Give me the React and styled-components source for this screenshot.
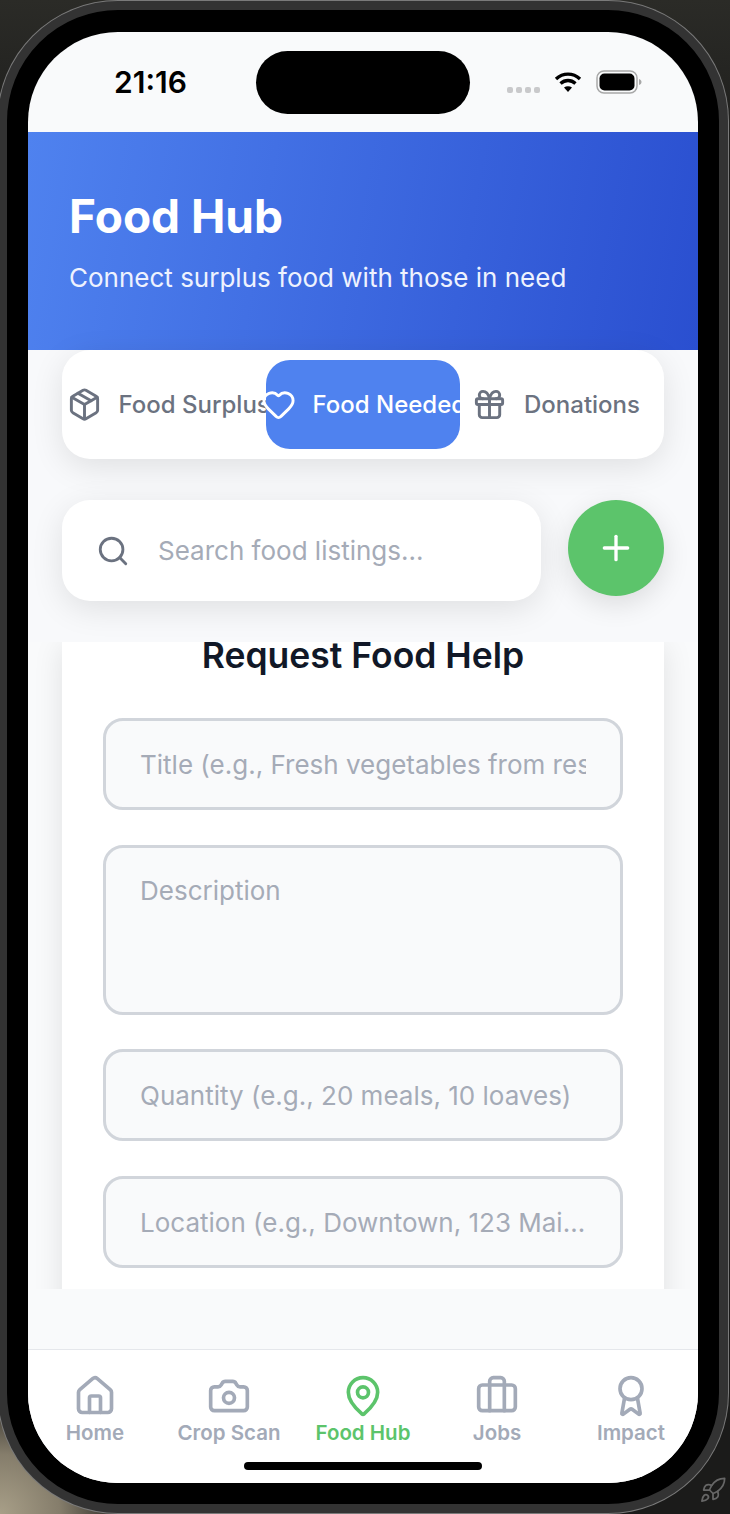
import React from 'react';
import styled, { createGlobalStyle } from 'styled-components';
import { Package, Heart, Gift, Search, Plus, House, Camera, MapPin, Briefcase, Award, Rocket } from 'lucide-react';

const GlobalStyle = createGlobalStyle`
  html, body {
    margin: 0;
    padding: 0;
    background: #1b1b1a;
  }
  * {
    box-sizing: border-box;
  }
`;

const Backdrop = styled.div`
  position: relative;
  width: 730px;
  height: 1514px;
  padding-top: 1px;
  overflow: hidden;
  background:
    radial-gradient(circle at 0 100%, #a89f88 0, #857d6b 60px, rgba(60, 56, 48, 0) 130px),
    linear-gradient(180deg, #2b2b27 0, #1b1b1a 12%, #1b1b1a 100%);
  font-family: Inter, 'Noto Sans', sans-serif;
`;

const Device = styled.div`
  width: 730px;
  height: 1512px;
  margin-left: -2px;
  padding: 22px 21px;
  background: #000;
  border: 9px solid #333;
  border-radius: 120px;
  box-shadow: 0 0 0 1px #7a7a7a;
`;

const Screen = styled.div`
  position: relative;
  display: flex;
  flex-direction: column;
  width: 670px;
  height: 1451px;
  overflow: hidden;
  background: #f9fafb;
  border-radius: 90px;
`;

const StatusBar = styled.div`
  position: relative;
  flex: 0 0 100px;
  display: flex;
  align-items: center;
  padding: 0 56px 0 86px;
`;

const Clock = styled.span`
  font-size: 30px;
  font-weight: 600;
  color: #000;
`;

const Island = styled.div`
  position: absolute;
  left: 228px;
  top: 19px;
  width: 214px;
  height: 63px;
  border-radius: 32px;
  background: #000;
`;

const StatusRight = styled.div`
  margin-left: auto;
  display: flex;
  align-items: center;
  gap: 14px;
`;

const Dots = styled.div`
  display: flex;
  gap: 3px;
  margin-top: 15px;
`;

const Dot = styled.i`
  width: 6px;
  height: 6px;
  border-radius: 2px;
  background: #c9c9cb;
`;

const Header = styled.header`
  flex: 0 0 218px;
  padding: 56px 41px 0;
  background: linear-gradient(100deg, #4f82ef 0%, #2a4fd0 100%);
  color: #fff;
`;

const Title = styled.h1`
  margin: 0;
  font-size: 46px;
  line-height: 56px;
  font-weight: 700;
`;

const Subtitle = styled.p`
  margin: 18px 0 0;
  font-size: 26px;
  line-height: 32px;
  font-weight: 400;
  color: #eef2fe;
`;

const TopArea = styled.div`
  flex: 0 0 292px;
  padding: 0 34px;
  background: #f8f9fb;
`;

const Tabs = styled.div`
  display: flex;
  height: 109px;
  padding: 10px;
  background: #fff;
  border-radius: 28px;
  box-shadow: 0 8px 32px rgba(0, 0, 0, 0.1);
`;

const Tab = styled.div`
  flex: 0 0 194px;
  min-width: 0;
  display: flex;
  align-items: center;
  justify-content: center;
  border-radius: 24px;
  background: ${({ $active }) => ($active ? '#4f82ef' : 'transparent')};
  color: ${({ $active }) => ($active ? '#fff' : '#6b7280')};
  svg {
    flex: none;
    margin-right: 17px;
    position: relative;
    z-index: 1;
  }
`;

const TabLabel = styled.span`
  flex: none;
  max-width: 147px;
  margin-right: ${({ $clipped }) => ($clipped ? '6px' : '2px')};
  overflow: hidden;
  white-space: nowrap;
  font-size: 24px;
  font-weight: 500;
`;

const SearchRow = styled.div`
  display: flex;
  align-items: flex-start;
  justify-content: space-between;
  margin-top: 41px;
`;

const SearchBox = styled.div`
  display: flex;
  align-items: center;
  width: 479px;
  height: 101px;
  padding: 0 34px;
  background: #fff;
  border-radius: 28px;
  box-shadow: 0 8px 32px rgba(0, 0, 0, 0.1);
  color: #6b7280;
`;

const SearchInput = styled.input`
  flex: 1;
  min-width: 0;
  margin-left: 28px;
  border: 0;
  outline: 0;
  padding: 0;
  background: transparent;
  font: 400 26px Inter, sans-serif;
  &::placeholder {
    color: #a5abb7;
    opacity: 1;
  }
`;

const Fab = styled.div`
  display: flex;
  align-items: center;
  justify-content: center;
  width: 96px;
  height: 96px;
  border-radius: 50%;
  background: #5cc46b;
  color: #fff;
  box-shadow: 0 8px 28px rgba(0, 0, 0, 0.12);
`;

const ScrollArea = styled.div`
  flex: 0 0 647px;
  padding: 0 34px;
  overflow: hidden;
  background: #f9fafb;
`;

const Card = styled.section`
  height: 700px;
  padding: 0 41px;
  background: #fff;
  box-shadow: 0 4px 28px rgba(0, 0, 0, 0.1);
`;

const CardTitle = styled.h2`
  margin: 0 0 49px;
  font-size: 35.5px;
  line-height: 27px;
  font-weight: 600;
  text-align: center;
  color: #111827;
`;

const fieldStyles = `
  display: block;
  width: 100%;
  margin: 0 0 35px;
  padding: 0 34px;
  background: #f9fafb;
  border: 3px solid #d1d5db;
  border-radius: 20px;
  outline: 0;
  font: 400 26px/32px Inter, sans-serif;
  &::placeholder {
    color: #a5abb7;
    opacity: 1;
  }
`;

const Field = styled.input`
  ${fieldStyles}
  height: 92px;
  text-overflow: ${({ $ellipsis }) => ($ellipsis ? 'ellipsis' : 'clip')};
  &::placeholder {
    text-overflow: ${({ $ellipsis }) => ($ellipsis ? 'ellipsis' : 'clip')};
  }
`;

const TextArea = styled.textarea`
  ${fieldStyles}
  height: 170px;
  margin-bottom: 34px;
  padding-top: 27px;
  resize: none;
`;

const Gap = styled.div`
  flex: 1;
`;

const BottomNav = styled.nav`
  flex: 0 0 134px;
  display: flex;
  background: #fff;
  border-top: 1px solid #e5e7eb;
`;

const NavItem = styled.div`
  flex: 1;
  display: flex;
  flex-direction: column;
  align-items: center;
  padding-top: 24px;
  color: ${({ $active }) => ($active ? '#5cc46b' : '#a3aab8')};
`;

const NavLabel = styled.span`
  margin-top: 1px;
  font-size: 20.5px;
  line-height: 28px;
  font-weight: 600;
`;

const HomeBar = styled.div`
  position: absolute;
  left: 216px;
  bottom: 13px;
  width: 238px;
  height: 8px;
  border-radius: 4px;
  background: #000;
`;

const CornerRocket = styled(Rocket)`
  position: absolute;
  right: 3px;
  bottom: 10px;
  color: #666;
`;

const Wifi = () => (
  <svg width="28" height="22" viewBox="0 0 28 22" fill="none" stroke="#000" strokeWidth="3.4">
    <path d="M2 8c7-6.500 17-6.500 24 0" />
    <path d="M6.500 12.500c4.500-4 10.500-4 15 0" />
    <path d="M14 21l-4-4.500c2.400-1.700 5.600-1.700 8 0z" fill="#000" stroke="none" />
  </svg>
);

const Battery = () => (
  <svg width="46" height="24" viewBox="0 0 46 24" fill="none">
    <rect x="1" y="1" width="40" height="22" rx="7" stroke="#a8a8a8" strokeWidth="1.500" />
    <rect x="3.500" y="3.500" width="35" height="17" rx="5" fill="#000" />
    <path d="M43 9c1.500.5 2.500 1.500 2.500 3s-1 2.500-2.500 3z" fill="#a8a8a8" />
  </svg>
);

const tabs = [
  { label: 'Food Surplus', icon: Package, clipped: true },
  { label: 'Food Needed', icon: Heart, active: true, clipped: true },
  { label: 'Donations', icon: Gift },
];

const navItems = [
  { label: 'Home', icon: House },
  { label: 'Crop Scan', icon: Camera },
  { label: 'Food Hub', icon: MapPin, active: true },
  { label: 'Jobs', icon: Briefcase },
  { label: 'Impact', icon: Award },
];

const App = () => (
  <Backdrop>
    <GlobalStyle />
    <Device>
      <Screen>
        <StatusBar>
          <Clock>21:16</Clock>
          <Island />
          <StatusRight>
            <Dots>
              <Dot />
              <Dot />
              <Dot />
              <Dot />
            </Dots>
            <Wifi />
            <Battery />
          </StatusRight>
        </StatusBar>
        <Header>
          <Title>Food Hub</Title>
          <Subtitle>Connect surplus food with those in need</Subtitle>
        </Header>
        <TopArea>
          <Tabs>
            {tabs.map(({ label, icon: Icon, active, clipped }) => (
              <Tab key={label} $active={active}>
                <Icon size={35} strokeWidth={2} />
                <TabLabel $clipped={clipped}>{label}</TabLabel>
              </Tab>
            ))}
          </Tabs>
          <SearchRow>
            <SearchBox>
              <Search size={34} strokeWidth={2} />
              <SearchInput placeholder="Search food listings..." />
            </SearchBox>
            <Fab>
              <Plus size={40} strokeWidth={2} />
            </Fab>
          </SearchRow>
        </TopArea>
        <ScrollArea>
          <Card>
            <CardTitle>Request Food Help</CardTitle>
            <Field placeholder="Title (e.g., Fresh vegetables from restaurant)" />
            <TextArea placeholder="Description" />
            <Field placeholder="Quantity (e.g., 20 meals, 10 loaves)" />
            <Field $ellipsis placeholder="Location (e.g., Downtown, 123 Main St)" />
          </Card>
        </ScrollArea>
        <Gap />
        <BottomNav>
          {navItems.map(({ label, icon: Icon, active }) => (
            <NavItem key={label} $active={active}>
              <Icon size={44} strokeWidth={2} />
              <NavLabel>{label}</NavLabel>
            </NavItem>
          ))}
        </BottomNav>
        <HomeBar />
      </Screen>
    </Device>
    <CornerRocket size={28} strokeWidth={1.5} />
  </Backdrop>
);

export default App;
